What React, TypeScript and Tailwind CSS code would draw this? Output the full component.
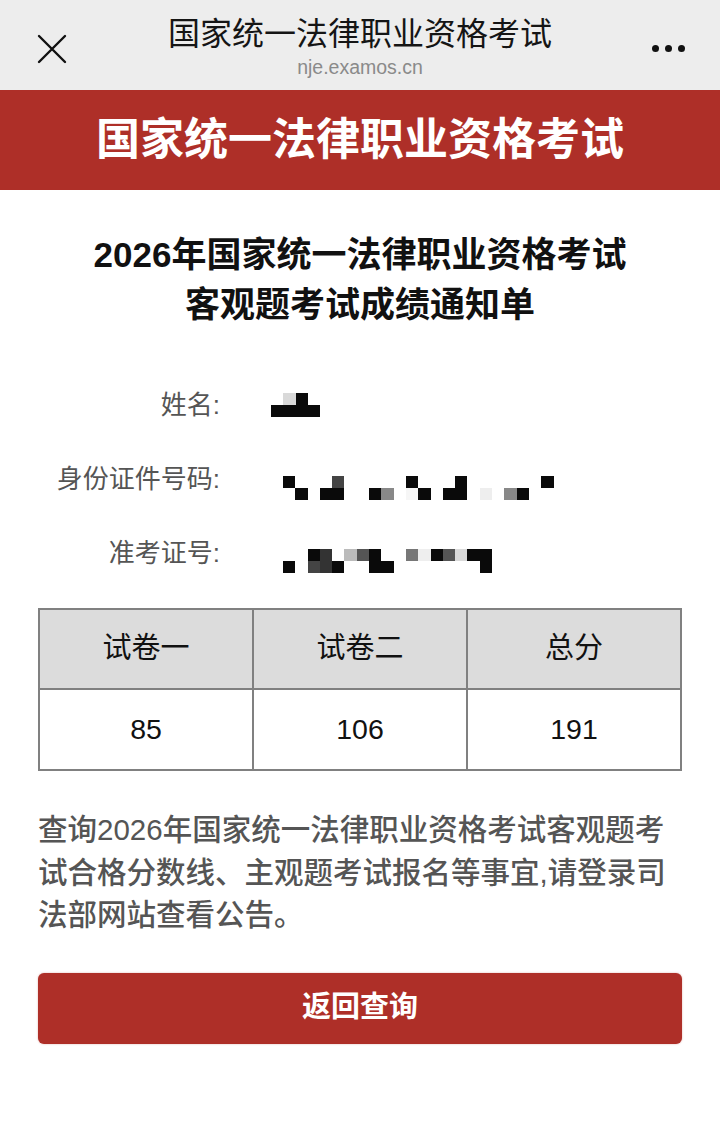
const FONT = {
  fontFamily: '"Liberation Sans", "Noto Sans CJK SC", sans-serif',
};

const CELL: Record<string, string> = {
  ".": "bg-transparent",
  k: "bg-[#0a0a0a]",
  d: "bg-[#333333]",
  D: "bg-[#444444]",
  m: "bg-[#555555]",
  g: "bg-[#777777]",
  G: "bg-[#888888]",
  l: "bg-[#bbbbbb]",
  L: "bg-[#d9d9d9]",
  e: "bg-[#eeeeee]",
  f: "bg-[#f6f6f6]",
};

function Mosaic({ rows, className }: { rows: string[]; className: string }) {
  return (
    <div className={`flex flex-col ${className}`}>
      {rows.map((r, i) => (
        <div key={i} className="flex">
          {r.split("").map((c, j) => (
            <div key={j} className={`h-[12.4px] w-[12.3px] shrink-0 ${CELL[c]}`} />
          ))}
        </div>
      ))}
    </div>
  );
}

function InfoRow({
  label,
  rows,
  offset,
}: {
  label: string;
  rows: string[];
  offset: string;
}) {
  return (
    <div className="flex h-[74px] items-center">
      <div className="w-[182px] shrink-0 text-right text-[26px] leading-none text-[#555]">
        {label}
      </div>
      <Mosaic rows={rows} className={offset} />
    </div>
  );
}

export default function App() {
  return (
    <div className="min-h-[1130px] w-[720px] bg-white" style={FONT}>
      {/* Browser top bar */}
      <div className="flex h-[90px] items-start bg-[#ededed]">
        <div className="w-[110px] shrink-0 pl-[37px] pt-[34px]">
          <svg width="30" height="30" viewBox="0 0 30 30">
            <path d="M2 2 L28 28 M28 2 L2 28" stroke="#111" strokeWidth="2.4" strokeLinecap="round" />
          </svg>
        </div>
        <div className="flex flex-1 flex-col items-center pt-[16px]">
          <div className="text-[32px] leading-[36px] text-[#151515]">国家统一法律职业资格考试</div>
          <div className="mt-[2px] text-[19.5px] leading-[26px] text-[#8a8a8a]">nje.examos.cn</div>
        </div>
        <div className="flex w-[110px] shrink-0 justify-end gap-[6px] pr-[35px] pt-[45px]">
          <span className="h-[7px] w-[7px] rounded-full bg-[#111]" />
          <span className="h-[7px] w-[7px] rounded-full bg-[#111]" />
          <span className="h-[7px] w-[7px] rounded-full bg-[#111]" />
        </div>
      </div>

      {/* Red banner */}
      <div className="flex h-[100px] items-center justify-center bg-[#ae2f28]">
        <h1 className="text-[44px] font-bold leading-none text-white">国家统一法律职业资格考试</h1>
      </div>

      <div className="px-[38px]">
        {/* Heading */}
        <div className="pt-[40px] text-center text-[35px] font-bold leading-[50px] text-[#111]">
          <div>2026年国家统一法律职业资格考试</div>
          <div>客观题考试成绩通知单</div>
        </div>

        {/* Personal info */}
        <div className="mt-[38px]">
          <InfoRow label="姓名:" rows={[".Lk.", "kkkk"]} offset="ml-[51px]" />
          <InfoRow
            label="身份证件号码:"
            rows={["k...D.....k...k......k", ".k.kk..kG.fk.kk.e.Gk.."]}
            offset="ml-[63px] mt-[18px]"
          />
          <InfoRow
            label="准考证号:"
            rows={["..kd.lmk..gekmLkk", "k.Ddk..kk.......k"]}
            offset="ml-[63px] mt-[16px]"
          />
        </div>

        {/* Score table */}
        <div className="mt-[18px] grid grid-cols-3 border-l-2 border-t-2 border-[#808080] text-[29px] text-[#111]">
          {["试卷一", "试卷二", "总分"].map((h) => (
            <div
              key={h}
              className="flex h-[80px] items-center justify-center border-b-2 border-r-2 border-[#808080] bg-[#dcdcdc]"
            >
              {h}
            </div>
          ))}
          {["85", "106", "191"].map((v) => (
            <div
              key={v}
              className="flex h-[81px] items-center justify-center border-b-2 border-r-2 border-[#808080] text-[28.5px]"
            >
              {v}
            </div>
          ))}
        </div>

        {/* Notice */}
        <p className="mt-[38px] text-[29.5px] font-medium leading-[42.5px] text-[#555]">
          查询2026年国家统一法律职业资格考试客观题考试合格分数线、主观题考试报名等事宜,请登录司法部网站查看公告。
        </p>

        {/* Button */}
        <button className="mt-[36px] flex h-[71px] w-full items-center justify-center rounded-[6px] bg-[#ae2f28] text-[29px] font-bold text-white shadow-[0_0_2px_rgba(174,47,40,0.4)]">
          返回查询
        </button>
      </div>
    </div>
  );
}
